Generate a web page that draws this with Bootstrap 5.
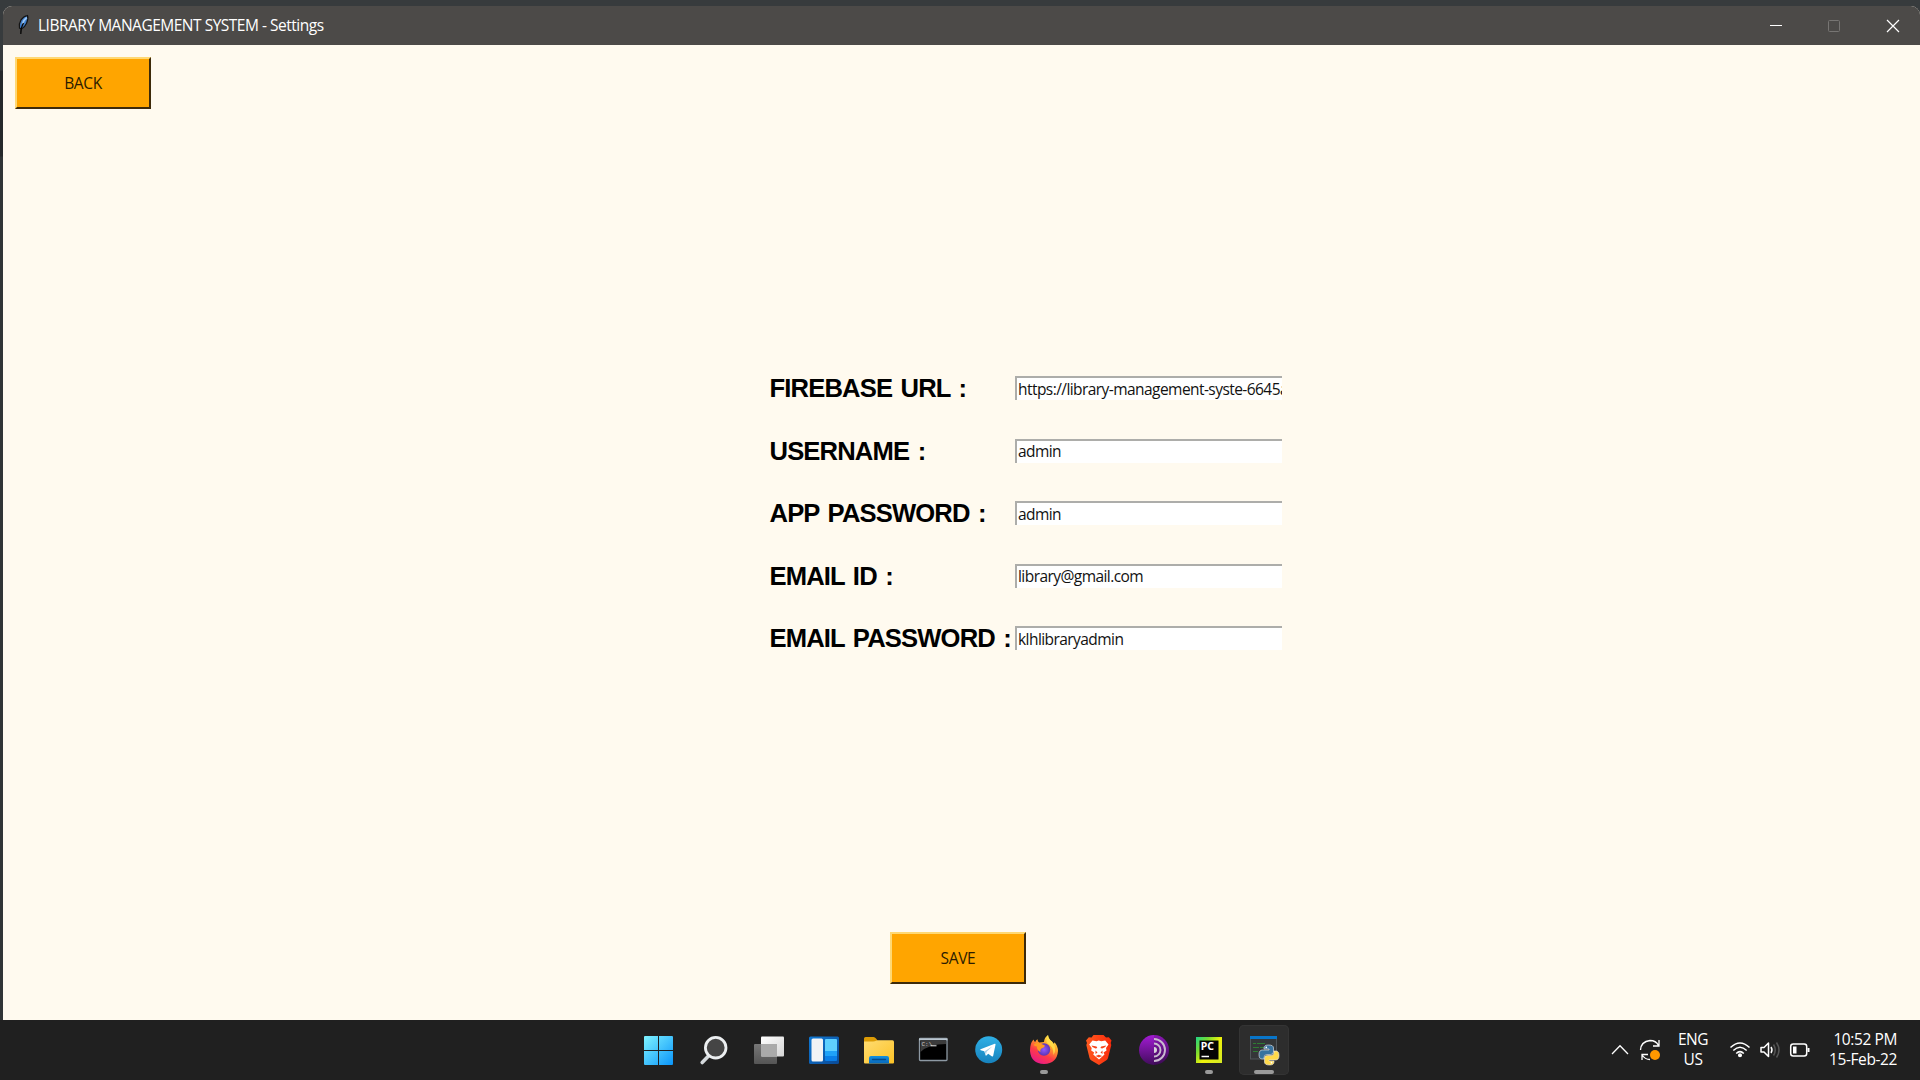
<!DOCTYPE html>
<html lang="en">
<head>
<meta charset="utf-8">
<title>LIBRARY MANAGEMENT SYSTEM - Settings</title>
<link href="https://cdn.jsdelivr.net/npm/bootstrap@5.3.0/dist/css/bootstrap.min.css" rel="stylesheet">
<style>
  body { width: 1920px; height: 1080px; background: #373b3d; font-family: "Open Sans", "Noto Sans", sans-serif; }
  .desk { height: 1020px; padding: 6px 0 0 3px; background: linear-gradient(#373b3d 0 70px, #26292b 71px 156px, #303436 157px); }
  .win { background: #fffaef; border-radius: 9px 9px 0 0; }
  .titlebar { height: 39px; background: #4c4a48; color: #fff; padding-left: 14px; }
  .titlebar .ttl { font-size: 15.5px; letter-spacing: -.49px; line-height: 39px; margin-left: 6px; }
  .tk-btn { width: 136px; height: 52px; background: #ffa500; color: #2b1c00; font-size: 15.5px; letter-spacing: -.35px; line-height: 46px; padding: 0 0 1px; border: 2px solid; border-color: #ffd873 #3d2a0a #3d2a0a #ffd873; border-radius: 0; }
  .client { padding: 12px 12px 36px; }
  .settings { width: 513px; margin-left: 754.5px; margin-top: 261px; row-gap: 26.5px; }
  .field { height: 36px; }
  .field label { width: 245.5px; font: bold 25.6px/36px "Liberation Sans", Arial, sans-serif; letter-spacing: -.85px; word-spacing: 2.2px; color: #000; white-space: pre; }
  .field input { width: 267px; height: 24px; border: 0; border-top: 2px solid #adadaa; border-left: 2px solid #adadaa; border-radius: 0; background: #fff; color: #111; font-size: 15.5px; line-height: 20px; padding: 0 0 1px 1px; letter-spacing: -.56px; outline: 0; }
  .save-row { padding-left: 875px; }
  .taskbar { height: 60px; background: #202020; color: #fff; padding: 5px 23px 0 634px; }
  .apps { gap: 5px; }
  .app { width: 50px; height: 50px; border-radius: 5px; }
  .app.active { background: #2d2d2d; box-shadow: inset 0 0 0 1px #343434; }
  .app svg { display: block; }
  .tray { height: 50px; font-size: 15.5px; line-height: 20px; }
  .lang { width: 50px; letter-spacing: -.5px; padding-bottom: 2px; }
  .clock { width: 87px; letter-spacing: -.4px; padding-bottom: 2px; }
</style>
</head>
<body class="overflow-hidden">
<div class="desk">
  <div class="win h-100 d-flex flex-column overflow-hidden">
    <header class="titlebar d-flex align-items-start flex-shrink-0">
      <svg width="15" height="39" viewBox="0 0 15 39"><path d="M2.500 22C1.500 16 5 10.500 10.500 9.500C12 14 8.500 21 4.500 23Z" fill="#3f7ecb" stroke="#141414" stroke-width="1.200"/><path d="M5.500 18Q7 13.500 9.800 11.500" stroke="#9cc8f5" stroke-width="1.800" fill="none"/><path d="M3.800 28Q3.500 22 6.500 17" stroke="#080808" stroke-width="1.300" fill="none"/></svg>
      <span class="ttl">LIBRARY MANAGEMENT SYSTEM - Settings</span>
      <svg class="ms-auto" width="150" height="39" viewBox="1770 6 150 39" fill="none"><path d="M1770 25.500h12" stroke="#fff"/><rect x="1828.500" y="20.500" width="11" height="11" rx="1" stroke="#777573"/><path d="M1887 20l12 12M1899 20l-12 12" stroke="#fff" stroke-width="1.200"/></svg>
    </header>
    <main class="client flex-grow-1 d-flex flex-column">
      <div><button class="btn tk-btn">BACK</button></div>
      <form class="settings d-flex flex-column">
        <div class="field d-flex align-items-center"><label for="f1">FIREBASE URL :</label><input id="f1" value="https://library-management-syste-6645a-default"></div>
        <div class="field d-flex align-items-center"><label for="f2">USERNAME :</label><input id="f2" value="admin"></div>
        <div class="field d-flex align-items-center"><label for="f3">APP PASSWORD :</label><input id="f3" value="admin"></div>
        <div class="field d-flex align-items-center"><label for="f4">EMAIL ID :</label><input id="f4" value="library@gmail.com"></div>
        <div class="field d-flex align-items-center"><label for="f5">EMAIL PASSWORD :</label><input id="f5" value="klhlibraryadmin"></div>
      </form>
      <div class="save-row mt-auto"><button class="btn tk-btn">SAVE</button></div>
    </main>
  </div>
</div>
<footer class="taskbar d-flex align-items-start">
  <nav class="apps d-flex">
    <div class="app"><svg width="50" height="50"><defs><linearGradient id="gw" x1="10" y1="11" x2="39" y2="40" gradientUnits="userSpaceOnUse"><stop stop-color="#7ff3ff"/><stop offset="1" stop-color="#0a95fa"/></linearGradient></defs><path fill="url(#gw)" d="M11 11h13v14H10V12q0-1 1-1zM25 11h13q1 0 1 1v13H25zM10 26h14v14H11q-1 0-1-1zM25 26h14v13q0 1-1 1H25z"/></svg></div>
    <div class="app"><svg width="50" height="50"><path d="M19 31.500L13.200 37.500" stroke="#d5dadd" stroke-width="3.600" stroke-linecap="round"/><circle cx="26.700" cy="22.700" r="10.300" fill="#454545" stroke="#eceff1" stroke-width="2.800"/></svg></div>
    <div class="app"><svg width="50" height="50"><defs><linearGradient id="gt" x2="1" y2="1"><stop stop-color="#fff"/><stop offset="1" stop-color="#d5d5d5"/></linearGradient><linearGradient id="gg" x2="0" y2="1"><stop stop-color="#777"/><stop offset="1" stop-color="#555"/></linearGradient></defs><rect x="10" y="19" width="23" height="20" rx="1" fill="url(#gg)"/><rect x="17" y="11.500" width="23" height="20" rx="1" fill="url(#gt)"/><path d="M17 19h16v12.500H18q-1 0-1-1z" fill="#aaa"/></svg></div>
    <div class="app"><svg width="50" height="50"><defs><linearGradient id="gd" x2="1" y2="1"><stop stop-color="#0f78d4"/><stop offset="1" stop-color="#0a4a96"/></linearGradient></defs><rect x="10" y="11.500" width="30" height="27.500" rx="1.500" fill="url(#gd)"/><rect x="12.500" y="13.500" width="11.500" height="23" rx="1.500" fill="#f2f3f5"/><path fill="#5fd0ff" d="M27 14h10q1 0 1 1v11H26V15q0-1 1-1z"/><path fill="#1fa2f8" d="M26 26h12v5H26z"/><path fill="#0a7fe8" d="M26 31h12v4q0 1-1 1H27q-1 0-1-1z"/></svg></div>
    <div class="app"><svg width="50" height="50"><defs><linearGradient id="gf" x2="1" y2="1"><stop stop-color="#ffdc72"/><stop offset="1" stop-color="#fcc226"/></linearGradient><linearGradient id="gb" x2="0" y2="1"><stop stop-color="#1490df"/><stop offset="1" stop-color="#0868bb"/></linearGradient></defs><path fill="#dc9b05" d="M10 13.500Q10 12 11.500 12H19.500Q21 12 22 13.500L24 16V21H10z"/><path fill="url(#gf)" d="M10 16.500H19Q21 16.500 22 15.800T24.500 15.200H38.500Q40 15.200 40 17V37.500Q40 38.500 39 38.500H11Q10 38.500 10 37.500z"/><path fill="url(#gb)" d="M15 38.500V33q0-2 2-2h16q2 0 2 2v5.500z"/><path d="M18.500 34.500h13" stroke="#064a8b" stroke-width="1.300" stroke-linecap="round"/></svg></div>
    <div class="app"><svg width="50" height="50"><rect x="10.500" y="13.500" width="27.500" height="22" rx=".8" fill="#000" stroke="#8d99a3" stroke-width="1.300"/><path d="M10 13.500h28.500v1.800H10z" fill="#bac6d0"/><path d="M11.500 15.500H37V19Q20 19 11.500 27z" fill="#3b3b3b"/><text x="12.500" y="21.300" fill="#ccc" font-family="Liberation Mono, monospace" font-size="6">C:\</text><path d="M21.500 20.800h6" stroke="#e8e8e8"/></svg></div>
    <div class="app"><svg width="50" height="50"><defs><linearGradient id="gl" x2="0" y2="1"><stop stop-color="#2fb0e6"/><stop offset="1" stop-color="#1782bd"/></linearGradient></defs><circle cx="24.700" cy="24.700" r="13.500" fill="url(#gl)"/><path fill="#fff" d="M16.500 24.300L30.700 18.700Q31.800 18.400 31.500 19.800L29.200 30.800Q28.900 32 27.700 31.300L24.200 28.700L22.400 30.500Q21.700 31 21.500 30L20.300 26.300L16.700 25.200Q15.800 24.800 16.500 24.300z"/><path d="M20.700 26.200L28.500 21.300L22.600 26.800L22 30z" fill="#a9d0e7"/></svg></div>
    <div class="app"><svg width="50" height="50"><defs><linearGradient id="gx" x1=".8" y1="0" x2=".25" y2="1"><stop stop-color="#fff44f"/><stop offset=".35" stop-color="#ffa52a"/><stop offset=".65" stop-color="#ff3c46"/><stop offset="1" stop-color="#e51790"/></linearGradient><radialGradient id="gv"><stop stop-color="#9059ff"/><stop offset="1" stop-color="#5b36b5"/></radialGradient></defs><path fill="url(#gx)" d="M14.500 14.500Q15.200 16.500 16.200 17Q17 15 18.500 14.300Q18.500 16.500 20.200 17.500L25 17Q25.200 12.500 29 10Q29.500 14 33 16.500Q34.500 18 34.800 19L35.500 17.200Q39 21 39 26Q38 38.500 25 39Q12 38.500 11 26Q10.800 18.500 14.500 14.500z"/><circle cx="25" cy="24.500" r="6.200" fill="url(#gv)"/><path fill="#ff9a22" d="M14.500 20Q18.500 16 22.500 19L25.500 20.200Q26.500 22 23.300 23Q20.500 24.500 21.500 27Q17.500 25 18 21.500Q16 21 14.500 20z"/><path fill="#ffe14c" d="M29 10Q29.500 14 33 16.500Q38.500 23 34.500 30Q34.500 21 28.500 18.500Q26 16 29 10z" opacity=".8"/><rect x="21" y="45" width="8" height="4" rx="2" fill="#9a9a9a"/></svg></div>
    <div class="app"><svg width="50" height="50"><defs><linearGradient id="gr" x2="1"><stop stop-color="#ff5a1f"/><stop offset="1" stop-color="#fa2b0c"/></linearGradient></defs><path fill="url(#gr)" d="M19.500 10H29.500L32 12.600L34.800 12.300L37.500 15.500L36.700 18L37.300 20L34 33Q33.500 34.500 32 35.500L25 40L17.500 35.500Q16 34.500 15.500 33L12.300 20L13 18L12 15.500L14.800 12.300L17.600 12.600z"/><path fill="#fff" d="M18.500 15.500L22.500 16.200L24.800 15.400L27.200 16.200L31.200 15.500L34.500 19.500L32 23L32.500 25.500L29.500 27.500L30.500 29.500L25 34.500L19.200 29.500L20.200 27.500L17.200 25.500L17.700 23L15.200 19.500z"/><path fill="#f6461c" d="M17.500 20.500L22.500 21.500L23.300 23L21.500 23.500L18.500 22zM32.200 20.500L27.200 21.500L26.400 23L28.200 23.500L31.200 22zM21.500 25.500L23.500 27.500L21.500 29zM28.500 25.500L26.500 27.500L28.500 29zM21.500 31L24.800 29.800L28.200 31L24.900 32.500z"/></svg></div>
    <div class="app"><svg width="50" height="50"><defs><linearGradient id="go" x2="0" y2="1"><stop stop-color="#a21bd3"/><stop offset="1" stop-color="#420c5d"/></linearGradient></defs><circle cx="25" cy="25" r="15" fill="url(#go)"/><g fill="none" stroke="#eee3f3" stroke-width="1.900"><path d="M25 14a11 11 0 0 1 0 22M25 18.500a6.500 6.500 0 0 1 0 13"/></g><path d="M25 22a3 3 0 0 1 0 6z" fill="#fff"/><path d="M25 10v30a15 15 0 0 0 0-30" fill="#20052e" opacity=".18"/></svg></div>
    <div class="app"><svg width="50" height="50"><defs><linearGradient id="gp" x2="1" y2=".8"><stop stop-color="#20d789"/><stop offset=".3" stop-color="#74dc33"/><stop offset=".6" stop-color="#eff20a"/><stop offset="1" stop-color="#d8ea22"/></linearGradient></defs><rect x="12" y="12" width="26" height="26" fill="url(#gp)"/><rect x="15.500" y="15.500" width="19" height="19" fill="#050505"/><text x="16.700" y="25" font-size="10.500" font-weight="bold" fill="#fff" font-family="Noto Sans, sans-serif">PC</text><path d="M17.500 31.500h7.500" stroke="#fff" stroke-width="1.500"/><rect x="21" y="45" width="8" height="4" rx="2" fill="#9a9a9a"/></svg></div>
    <div class="app active"><svg width="50" height="50"><rect x="11.500" y="11.500" width="26" height="22.500" fill="#343638" stroke="#51565a"/><path d="M11 11h27v3H11z" fill="#0875c9"/><path d="M14 18.500h3m1 0h8M14 22.500h6m1 0h4M14 26.500h5" stroke="#2e7d32" stroke-width="1.200"/><g stroke="#eee" stroke-width=".6"><path fill="#39739f" d="M29.500 20Q34.500 20 34.500 23V27Q34.500 29.500 31.500 29.500H28Q25 29.500 25 32.500V34H23Q20 34 20 29.500T23.500 25H30V24H25V23Q25 20 29.500 20z"/><path fill="#ffd94b" d="M30.500 40Q25.500 40 25.500 37V33Q25.500 30.500 28.500 30.500H32Q35 30.500 35 27.500V26H37Q40 26 40 30.500T36.500 35H30V36H35V37Q35 40 30.500 40z"/></g><circle cx="27.300" cy="22.300" r=".9" fill="#fff"/><circle cx="32.500" cy="37.700" r=".9" fill="#fff"/><rect x="15" y="45" width="20" height="4" rx="2" fill="#9a9a9a"/></svg></div>
  </nav>
  <div class="tray ms-auto d-flex align-items-center">
    <svg width="58" height="50" viewBox="1610 1025 58 50" fill="none" stroke="#fff" stroke-width="1.300"><path d="M1612 1054l8-8.300l8 8.300"/><path d="M1640.500 1050Q1641 1041.500 1650 1040.500Q1656 1040.500 1658.500 1045.500M1659 1040v6h-6M1642 1060v-5.500h6M1642 1055Q1645 1059.500 1650 1059.500"/><circle cx="1655" cy="1055" r="5" fill="#ff9800" stroke="none"/></svg>
    <div class="lang text-center">ENG<br>US</div>
    <svg width="92" height="50" viewBox="1718 1025 92 50" fill="none" stroke="#fff" stroke-width="1.500"><path d="M1730.500 1047.500Q1740 1038.500 1749.500 1047.500M1733.300 1050.500Q1740 1044 1746.700 1050.500M1736.200 1053.500Q1740 1049.800 1743.800 1053.500"/><circle cx="1740" cy="1055.300" r="1.300" fill="#fff"/><path d="M1761 1047.500h3l4.500-4.500v13.500l-4.500-4.500h-3z" stroke-linejoin="round"/><path d="M1771 1047Q1773 1050 1771 1053"/><path d="M1773.500 1044.500Q1777 1050 1773.500 1055.500M1776.500 1042.500Q1781.500 1050 1776.500 1057.500" stroke="#555"/><rect x="1790.700" y="1044" width="16" height="12" rx="2.500"/><path d="M1793 1046.500h3.500v7H1793z" fill="#fff" stroke="none"/><path d="M1808.500 1048v4" stroke-width="2"/></svg>
    <div class="clock text-end text-nowrap">10:52 PM<br>15-Feb-22</div>
  </div>
</footer>
<script src="https://cdn.jsdelivr.net/npm/bootstrap@5.3.0/dist/js/bootstrap.bundle.min.js"></script>
</body>
</html>
